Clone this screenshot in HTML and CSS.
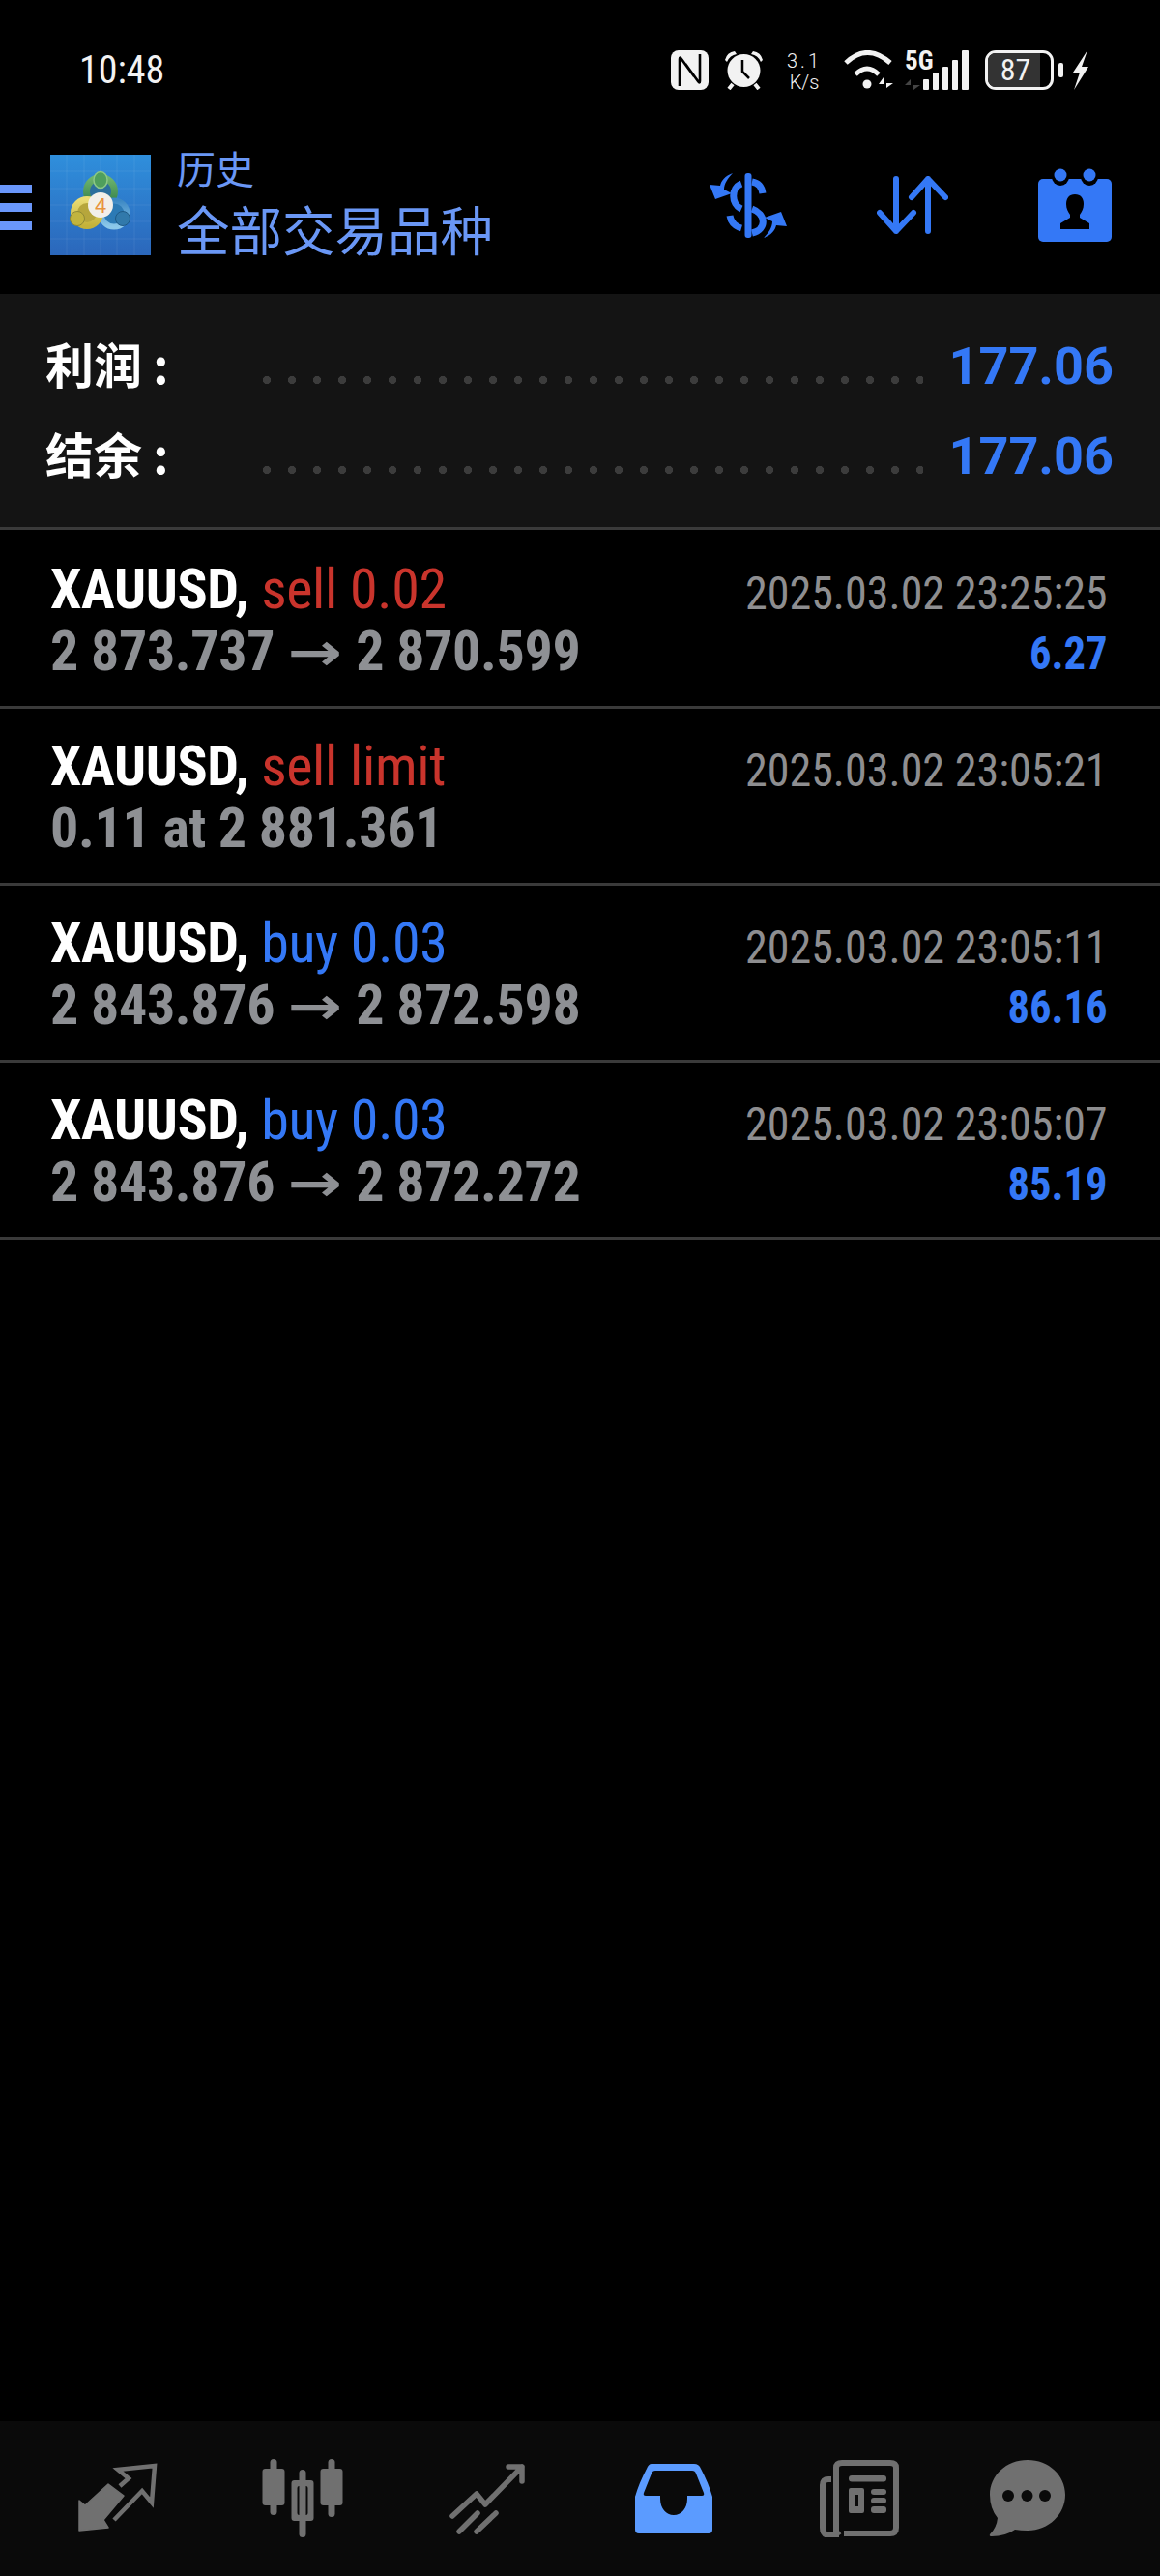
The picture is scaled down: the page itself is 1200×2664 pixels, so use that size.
FILE: index.html
```html
<!DOCTYPE html>
<html lang="zh-CN">
<head>
    <meta charset="UTF-8">
    <meta name="viewport" content="width=device-width, initial-scale=1.0">
    <title>历史</title>
    <link rel="stylesheet" href="styles.css">
</head>
<body>
    <div class="phone">
        <!-- status bar -->
        <div class="status">
            <span class="clock">10:48</span>
            <svg class="st-nfc" viewBox="0 0 39 41"><rect width="39" height="41" rx="8" fill="#f2f2f2"/><path d="M9 37V9Q9 6 11 9L24 27M30 4V32Q30 35 28 32L15 14" fill="none" stroke="#000" stroke-width="2.6"/></svg>
            <svg class="st-alarm" viewBox="0 0 41 41"><path d="M1 10Q3 2 11 1L13 4Q6 5 3 12ZM40 10Q38 2 30 1L28 4Q35 5 38 12Z" fill="#f2f2f2"/><circle cx="20.5" cy="21" r="17" fill="#f2f2f2"/><path d="M5 40l4-5M36 40l-4-5" stroke="#f2f2f2" stroke-width="4"/><path d="M19 10v12l7 7" fill="none" stroke="#000" stroke-width="2.5"/></svg>
            <div class="speed"><span>3.1</span><span>K/s</span></div>
            <svg class="st-wifi" viewBox="0 0 51 41"><path d="M2 13Q24-8 48 13M12 25Q24 13 36 25" fill="none" stroke="#f2f2f2" stroke-width="5"/><circle cx="24" cy="35" r="4.5" fill="#f2f2f2"/><path d="M41 39V28l-5 7h5zM44 28v11l7-5h-7z" fill="#f2f2f2"/></svg>
            <div class="st-signal">
                <span class="five-g">5G</span>
                <svg viewBox="0 0 66 41"><path d="M6 41V30l-6 6h6zM9 30v11l7-5H9z" fill="#444"/><rect x="19" y="30" width="6" height="11" rx="1" fill="#f2f2f2"/><rect x="29" y="23" width="6" height="18" rx="1" fill="#f2f2f2"/><rect x="39" y="17" width="6" height="24" rx="1" fill="#f2f2f2"/><rect x="49" y="10" width="6" height="31" rx="1" fill="#f2f2f2"/><rect x="59" y="0" width="7" height="41" rx="1" fill="#f2f2f2"/></svg>
            </div>
            <div class="battery"><span class="batt-fill"></span><span class="batt-num">87</span></div>
            <span class="batt-tip"></span>
            <svg class="st-bolt" viewBox="0 0 16 41"><path d="M15 0L0 23h7L1 41 16 17H9z" fill="#f2f2f2"/></svg>
        </div>

        <!-- header -->
        <div class="header">
            <div class="burger"><span></span><span></span><span></span></div>
            <svg class="logo" viewBox="0 0 104 104">
                <defs>
                    <linearGradient id="bg" x1="0" y1="0" x2="0" y2="1"><stop offset="0" stop-color="#2f8fdc"/><stop offset="1" stop-color="#2b67bb"/></linearGradient>
                    <linearGradient id="gr" x1="0" y1="0" x2="0" y2="1"><stop offset="0" stop-color="#6fb56e"/><stop offset="1" stop-color="#2f7c46"/></linearGradient>
                    <linearGradient id="ye" x1="0" y1="0" x2="0" y2="1"><stop offset="0" stop-color="#e9dc74"/><stop offset="1" stop-color="#c4b23a"/></linearGradient>
                    <linearGradient id="bl" x1="0" y1="0" x2="0" y2="1"><stop offset="0" stop-color="#3c88c4"/><stop offset="1" stop-color="#8cc8ea"/></linearGradient>
                </defs>
                <rect width="104" height="104" fill="url(#bg)"/>
                <path d="M17 0v104M35 0v104M52 0v104M69 0v104M87 0v104M0 17h104M0 35h104M0 52h104M0 69h104M0 87h104" stroke="#fff" stroke-opacity=".07"/>
                <circle cx="52" cy="38" r="14.5" fill="#2c6f9c" stroke="url(#gr)" stroke-width="7"/>
                <ellipse cx="52" cy="26" rx="7" ry="8.5" fill="#4f9f5d" stroke="#8cc887" stroke-width="1.5"/>
                <circle cx="66" cy="61" r="13.5" fill="#2c7ab5" stroke="url(#bl)" stroke-width="6"/>
                <circle cx="38" cy="60" r="13.5" fill="#b6a63c" stroke="url(#ye)" stroke-width="7"/>
                <circle cx="28" cy="66" r="7.5" fill="#c2b43e" stroke="#8f8a36" stroke-width="1"/>
                <circle cx="75" cy="66" r="7.5" fill="#3179ab" stroke="#1f5a86" stroke-width="1"/>
                <circle cx="52" cy="52" r="13" fill="#f2efe9"/>
                <text class="logo-four" x="52" y="60" text-anchor="middle">4</text>
            </svg>
            <div class="titles">
                <div class="title-sm">历史</div>
                <div class="title-lg">全部交易品种</div>
            </div>
            <div class="actions">
                <svg class="ic-dollar" viewBox="0 0 80 67">
                    <path d="M24 0C16 3 12 8 11 13L0 12 6 27 23 21 15 17C15 11 19 5 24 0Z" fill="#3478f6"/>
                    <path d="M24 0C16 3 12 8 11 13L0 12 6 27 23 21 15 17C15 11 19 5 24 0Z" fill="#3478f6" transform="rotate(180 40 33.5)"/>
                    <rect x="36.5" y="0" width="7" height="67" rx="3" fill="#3478f6"/>
                    <path d="M44 9C50 10 54 14 55 21M33 11C22 15 22 32 33 37M44 37C58 42 60 58 44 62M21 44C22 50 26 55 33 57" fill="none" stroke="#3478f6" stroke-width="7"/>
                </svg>
                <svg class="ic-sort" viewBox="0 0 74 60"><path d="M20 3V57M3 38L20 57 38 38M53 57V3M36 22L53 3 71 22" fill="none" stroke="#3478f6" stroke-width="6" stroke-linecap="round" stroke-linejoin="round"/></svg>
                <svg class="ic-cal" viewBox="0 0 76 76">
                    <rect y="11" width="76" height="65" rx="5" fill="#3478f6"/>
                    <circle cx="23" cy="9" r="9" fill="#000"/><circle cx="53" cy="9" r="9" fill="#000"/>
                    <circle cx="23" cy="7" r="6.5" fill="#3478f6"/><circle cx="53" cy="7" r="6.5" fill="#3478f6"/>
                    <path d="M38 27c6 0 9 4 9 10 0 5-2 8-4 11v3l10 6v6H23v-6l10-6v-3c-2-3-4-6-4-11 0-6 3-10 9-10z" fill="#000"/>
                </svg>
            </div>
        </div>

        <!-- totals -->
        <div class="summary">
            <div class="sum-row"><span class="sum-label">利润 :</span><span class="sum-dots"></span><span class="sum-val">177.06</span></div>
            <div class="sum-row"><span class="sum-label">结余 :</span><span class="sum-dots"></span><span class="sum-val">177.06</span></div>
        </div>

        <!-- history list -->
        <div class="list">
            <div class="row">
                <div class="row-left">
                    <div class="line-a"><b>XAUUSD,</b> <span class="sell">sell 0.02</span></div>
                    <div class="line-b">2 873.737 <span class="arrow">→</span> 2 870.599</div>
                </div>
                <div class="row-right">
                    <div class="date">2025.03.02 23:25:25</div>
                    <div class="profit">6.27</div>
                </div>
            </div>
            <div class="row">
                <div class="row-left">
                    <div class="line-a"><b>XAUUSD,</b> <span class="sell">sell limit</span></div>
                    <div class="line-b">0.11 at 2 881.361</div>
                </div>
                <div class="row-right">
                    <div class="date">2025.03.02 23:05:21</div>
                </div>
            </div>
            <div class="row">
                <div class="row-left">
                    <div class="line-a"><b>XAUUSD,</b> <span class="buy">buy 0.03</span></div>
                    <div class="line-b">2 843.876 <span class="arrow">→</span> 2 872.598</div>
                </div>
                <div class="row-right">
                    <div class="date">2025.03.02 23:05:11</div>
                    <div class="profit">86.16</div>
                </div>
            </div>
            <div class="row">
                <div class="row-left">
                    <div class="line-a"><b>XAUUSD,</b> <span class="buy">buy 0.03</span></div>
                    <div class="line-b">2 843.876 <span class="arrow">→</span> 2 872.272</div>
                </div>
                <div class="row-right">
                    <div class="date">2025.03.02 23:05:07</div>
                    <div class="profit">85.19</div>
                </div>
            </div>
        </div>

        <!-- bottom tabs -->
        <div class="tabs">
            <svg class="tab" viewBox="0 0 88 81"><g transform="translate(4 6)"><path d="M1 68V37l6 5L31 20 47 32 26 57l5 8z" fill="#707070" stroke="#707070" stroke-width="1.5" stroke-linejoin="round"/><path d="M43 22L52 14 41 5 79 1 76 39 66 27 37 57" fill="none" stroke="#707070" stroke-width="4.5"/></g></svg>
            <svg class="tab" viewBox="0 0 88 81"><g transform="translate(2.5 0)" fill="#707070"><rect x="8" y="0" width="7" height="58" rx="3.5"/><rect y="10" width="23" height="38" rx="3"/><rect x="38" y="11" width="7" height="70" rx="3.5"/><path fill-rule="evenodd" d="M33 22h17a3 3 0 0 1 3 3v36a3 3 0 0 1-3 3H33a3 3 0 0 1-3-3V25a3 3 0 0 1 3-3zM38 28a2 2 0 0 0-2 2v26a2 2 0 0 0 2 2h7a2 2 0 0 0 2-2V30a2 2 0 0 0-2-2z"/><rect x="68" y="0" width="7" height="60" rx="3.5"/><rect x="60" y="10" width="23" height="38" rx="3"/></g></svg>
            <svg class="tab" viewBox="0 0 88 81"><g transform="translate(5 5)" fill="none" stroke="#707070" stroke-width="5.5" stroke-linecap="round" stroke-linejoin="round"><path d="M2 54L27 31 36 42 74 3M60 3H74V18"/><path d="M28 51L9 70M47 51L27 70"/></g></svg>
            <svg class="tab" viewBox="0 0 88 81"><path transform="translate(4 5)" fill-rule="evenodd" fill="#5b9bff" d="M17 0H61Q66 0 68 5 76 20 80 34V68Q80 72 76 72H4Q0 72 0 68V34Q4 20 12 5 14 0 17 0ZM21 7Q18 7 17 10L9 30Q8 33 11 33H26V36C26 46 32 53 40 53S54 46 54 36V33H69Q72 33 71 30L63 10Q62 7 59 7Z"/></svg>
            <svg class="tab" viewBox="0 0 88 81"><g transform="translate(3 1)"><path d="M20 78H11Q3 78 3 70V26Q3 20 9 20H12M20 78Q20 78 17 74V8Q17 3 23 3H73Q79 3 79 8V70Q79 76 73 76H25" fill="none" stroke="#707070" stroke-width="6"/><g fill="#707070"><rect x="30" y="16" width="39" height="6.5" rx="3"/><rect x="53" y="30" width="16" height="6" rx="3"/><rect x="53" y="39" width="16" height="6" rx="3"/><rect x="53" y="48" width="16" height="7" rx="3"/><path fill-rule="evenodd" d="M32 29h12a2 2 0 0 1 2 2v22a2 2 0 0 1-2 2H32a2 2 0 0 1-2-2V31a2 2 0 0 1 2-2zM36 36v12h4V36z"/></g></g></svg>
            <svg class="tab tab-last" viewBox="0 0 88 81"><g transform="translate(4 1)"><path fill="#707070" d="M40 0C62 0 79 16 79 36S62 73 40 73Q33 73 27 72 17 79 3 79 0 79 1 77 8 70 9 60 1 50 1 36C1 16 18 0 40 0Z"/><circle cx="20" cy="37" r="6" fill="#0a0a0a"/><circle cx="39.5" cy="37" r="6" fill="#0a0a0a"/><circle cx="58" cy="37" r="6" fill="#0a0a0a"/></g></svg>
        </div>
    </div>
</body>
</html>
```

FILE: styles.css
```css
* {
    box-sizing: border-box;
}
html, body {
    margin: 0;
    padding: 0;
    background: #000;
}
body {
    font-family: Roboto, "Noto Sans CJK SC", sans-serif;
    color: #fff;
}
svg {
    display: block;
    flex: none;
}
.phone {
    width: 1200px;
    height: 2664px;
    display: flex;
    flex-direction: column;
    overflow: hidden;
}

/* status bar */
.status {
    height: 140px;
    display: flex;
    align-items: flex-start;
    padding: 52px 0 0 82px;
}
.clock {
    font-size: 40px;
    line-height: 41px;
    color: #f2f2f2;
    font-stretch: 75%;
    margin-right: auto;
}
.st-nfc {
    width: 39px;
    height: 41px;
}
.st-alarm {
    width: 41px;
    height: 41px;
    margin-left: 16px;
}
.speed {
    width: 32px;
    margin-left: 26px;
    display: flex;
    flex-direction: column;
    align-items: center;
    font-size: 20px;
    line-height: 22px;
    font-weight: 300;
    color: #f2f2f2;
}
.speed span:first-child {
    letter-spacing: 3px;
}
.st-wifi {
    width: 51px;
    height: 41px;
    margin-left: 25px;
}
.st-signal {
    position: relative;
    width: 66px;
    height: 41px;
    margin-left: 12px;
}
.st-signal svg {
    width: 66px;
    height: 41px;
}
.five-g {
    position: absolute;
    left: 0;
    top: -2px;
    font-size: 27px;
    line-height: 26px;
    font-weight: 700;
    font-stretch: 75%;
    color: #f2f2f2;
}
.battery {
    position: relative;
    width: 71px;
    height: 41px;
    margin-left: 17px;
    border: 3px solid #f2f2f2;
    border-radius: 11px;
    overflow: hidden;
    text-align: center;
}
.batt-fill {
    position: absolute;
    left: 0;
    top: 0;
    bottom: 0;
    width: 83%;
    background: #333;
}
.batt-num {
    position: relative;
    left: -4px;
    font-size: 32px;
    line-height: 35px;
    font-stretch: 75%;
    color: #f2f2f2;
}
.batt-tip {
    width: 5px;
    height: 15px;
    margin: 13px 0 0 5px;
    border-radius: 2px;
    background: #f2f2f2;
}
.st-bolt {
    width: 16px;
    height: 41px;
    margin: 0 74px 0 10px;
}

/* header */
.header {
    height: 164px;
    padding: 20px 0 40px;
    display: flex;
    align-items: center;
}
.burger {
    width: 33px;
    display: flex;
    flex-direction: column;
    gap: 10px;
    margin-top: 4px;
}
.burger span {
    height: 9px;
    background: #6a97fb;
}
.logo {
    width: 104px;
    height: 104px;
    margin-left: 19px;
}
.logo-four {
    font-family: "Liberation Sans", sans-serif;
    font-size: 22px;
    fill: #e8943c;
}
.titles {
    margin: 6px 0 0 27px;
    color: #6a97f5;
}
.title-sm {
    font-size: 40px;
    line-height: 50px;
}
.title-lg {
    font-size: 54.5px;
    line-height: 76px;
}
.actions {
    margin-left: auto;
    display: flex;
    align-items: center;
    padding-right: 50px;
}
.ic-dollar {
    width: 80px;
    height: 67px;
}
.ic-sort {
    width: 74px;
    height: 60px;
    margin-left: 93px;
}
.ic-cal {
    width: 76px;
    height: 76px;
    margin-left: 93px;
}

/* summary */
.summary {
    height: 244px;
    padding: 31px 48px 0 47px;
    background: #141414;
    border-bottom: 3px solid #3a3a3a;
}
.sum-row {
    display: flex;
    align-items: baseline;
    height: 93px;
}
.sum-label {
    width: 225px;
    font-size: 50px;
    line-height: 80px;
    font-weight: 700;
    font-family: "Noto Sans CJK SC", sans-serif;
}
.sum-dots {
    flex: 1;
    height: 8px;
    margin-right: 26px;
    background: radial-gradient(circle at 4px 4px, #3c3c3c 3.8px, transparent 4.4px) 0 0 / 26px 8px repeat-x;
}
.sum-val {
    font-size: 54px;
    line-height: 80px;
    font-weight: 700;
    color: #3478f6;
}

/* list */
.list {
    padding-top: 2px;
}
.row {
    height: 183px;
    padding: 27px 54px 0 52px;
    display: flex;
    justify-content: space-between;
    border-bottom: 3px solid #3a3a3a;
    font-stretch: 75%;
}
.line-a, .line-b {
    font-size: 58px;
    line-height: 64px;
    letter-spacing: -0.35px;
    white-space: nowrap;
}
.line-a b {
    font-weight: 700;
}
.line-b {
    font-weight: 700;
    color: #8e9094;
}
.arrow {
    display: inline-block;
    margin: 0 7px 0 6px;
    font-family: "DejaVu Sans", sans-serif;
    font-size: 54px;
    line-height: 50px;
    font-weight: 700;
    font-stretch: 100%;
    transform: scaleX(1.25);
}
.sell {
    color: #c9342c;
}
.buy {
    color: #3478f6;
}
.row-right {
    text-align: right;
    padding-top: 6px;
}
.date, .profit {
    font-size: 49px;
    line-height: 62px;
    white-space: nowrap;
    transform-origin: right center;
}
.date {
    color: #8e8e90;
    transform: scaleX(0.94);
}
.profit {
    font-weight: 700;
    color: #3478f6;
    transform: scaleX(0.91);
}

/* bottom tabs */
.tabs {
    margin-top: auto;
    height: 160px;
    padding: 39px 0 0 77px;
    background: #0a0a0a;
    display: flex;
    align-items: flex-start;
    gap: 104px;
}
.tab {
    width: 88px;
    height: 81px;
}
.tab-last {
    margin-left: -18px;
}
```
